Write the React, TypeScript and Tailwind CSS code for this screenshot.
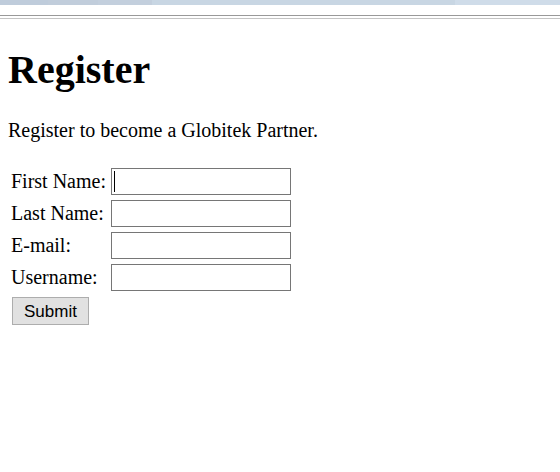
import React from 'react';

const fields = [
  { label: 'First Name:', name: 'first_name' },
  { label: 'Last Name:', name: 'last_name' },
  { label: 'E-mail:', name: 'email' },
  { label: 'Username:', name: 'username' },
];

export default function App() {
  return (
    <div className="min-h-[472px] w-[560px] bg-white font-['Liberation_Serif',serif] text-black">
      {/* browser chrome remnants */}
      <div className="flex h-[5px]">
        <div className="w-[48px] bg-[#bfccdb]" />
        <div className="w-[50px] bg-[#c1cddb]" />
        <div className="w-[54px] bg-[#c3cfdd]" />
        <div className="w-[303px] bg-[#c8d6e3]" />
        <div className="flex-1 bg-[#cfdce9]" />
      </div>
      <div className="h-[10px]" />
      <div className="h-px bg-[#999999]" />
      <div className="h-[2px]" />
      <div className="h-px bg-[#c4c4c4]" />

      <div className="px-2">
        <h1 className="mt-[28px] text-[40px] font-bold leading-[46px]">Register</h1>
        <p className="mt-[26px] text-[20px] leading-[23px]">Register to become a Globitek Partner.</p>

        <form className="mt-[23px]">
          <div className="grid w-fit grid-cols-[98px_auto] gap-x-[2px] gap-y-[3px] p-[2px]">
            {fields.map((f, i) => (
              <React.Fragment key={f.name}>
                <label htmlFor={f.name} className="flex items-center p-px text-[20px] leading-[23px]">
                  {f.label}
                </label>
                <div className="p-px">
                  <div className="relative h-[27px] w-[180px] border border-[#767676] bg-white">
                    {i === 0 && <div className="absolute left-[2px] top-[2px] h-[21px] w-px bg-black" />}
                    <input id={f.name} className="h-full w-full bg-transparent outline-none" />
                  </div>
                </div>
              </React.Fragment>
            ))}
          </div>
          <div className="px-[2px]">
            <button
              type="button"
              className="ml-[2px] mt-[3px] h-[28px] w-[77px] border border-[#adadad] bg-[#e1e1e1] font-['Liberation_Sans',sans-serif] text-[17px] leading-none"
            >
              Submit
            </button>
          </div>
        </form>
      </div>
    </div>
  );
}
